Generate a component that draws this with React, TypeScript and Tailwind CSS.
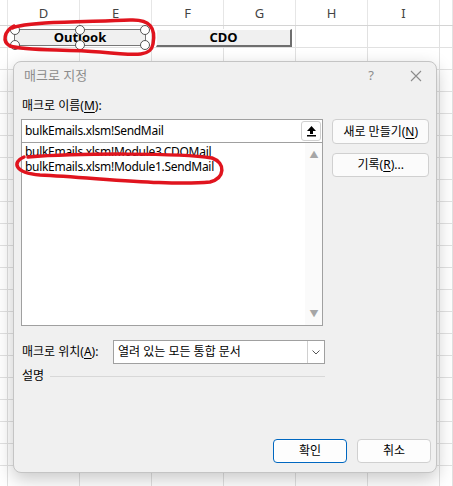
const COLS = [
  { w: 8, label: "" },
  { w: 72, label: "D" },
  { w: 72, label: "E" },
  { w: 72, label: "F" },
  { w: 72, label: "G" },
  { w: 72, label: "H" },
  { w: 72, label: "I" },
  { w: 13, label: "" },
];

const ROWS = Array.from({ length: 21 }, (_, i) => i);

const FONT = "font-['Noto_Sans','Noto_Sans_CJK_KR',sans-serif]";

function Mn({ c }: { c: string }) {
  return (
    <>
      (<span className="underline underline-offset-2">{c}</span>)
    </>
  );
}

function Sheet() {
  return (
    <div className="flex flex-col">
      <div className="flex h-[26px] border-b border-[#d4d4d4] bg-white">
        {COLS.map((c, i) => (
          <div
            key={i}
            style={{ width: c.w }}
            className="flex shrink-0 items-center justify-center border-r border-[#e6e6e6] pt-[3px] text-[13px] text-[#444]"
          >
            {c.label}
          </div>
        ))}
      </div>
      {ROWS.map((r) => (
        <div key={r} className="flex h-[22px] border-b border-[#e1e1e1] bg-white">
          {COLS.map((c, i) => (
            <div key={i} style={{ width: c.w }} className="shrink-0 border-r border-[#e1e1e1]" />
          ))}
        </div>
      ))}
    </div>
  );
}

function Handle({ x, y }: { x: number; y: number }) {
  return (
    <div
      style={{ left: x - 5, top: y - 5 }}
      className="absolute h-[10px] w-[10px] rounded-full border-[1.5px] border-[#555] bg-white"
    />
  );
}

function SheetButtons() {
  return (
    <>
      <div className="absolute left-[14px] top-[29px] flex h-[17px] w-[132px] items-center justify-center border border-[#777] bg-[#f0f0f0] text-[13px] font-bold text-black">
        Outlook
      </div>
      <Handle x={15} y={30} />
      <Handle x={80} y={30} />
      <Handle x={145} y={30} />
      <Handle x={15} y={45} />
      <Handle x={80} y={45} />
      <Handle x={145} y={45} />
      <div className="absolute left-[156px] top-[29px] flex h-[18px] w-[136px] items-center justify-center border border-b-2 border-r-2 border-t-white border-l-white border-b-[#6e6e6e] border-r-[#6e6e6e] bg-[#f0f0f0] text-[13px] font-bold text-black">
        CDO
      </div>
    </>
  );
}

function CollapseIcon() {
  return (
    <svg width="11" height="12" viewBox="0 0 11 12">
      <path d="M5.5 1 L10 6 L7 6 L7 9 L4 9 L4 6 L1 6 Z" fill="#000" />
      <rect x="1" y="10" width="9" height="1.5" fill="#000" />
    </svg>
  );
}

function Dialog() {
  return (
    <div className="absolute left-[13px] top-[61px] flex h-[412px] w-[424px] flex-col rounded-[8px] border border-[#c4c4c4] bg-[#f0f0f0] shadow-[0_6px_18px_rgba(0,0,0,0.22)]">
      <div className="flex h-[28px] items-center justify-between pl-[10px] pr-[14px]">
        <span className="text-[13px] text-[#8c8c8c]">매크로 지정</span>
        <div className="flex items-center gap-[36px] text-[#8c8c8c]">
          <span className="text-[13px]">?</span>
          <svg width="12" height="12" viewBox="0 0 12 12">
            <path d="M1 1 L11 11 M11 1 L1 11" stroke="#8c8c8c" strokeWidth="1.1" />
          </svg>
        </div>
      </div>

      <div className="flex flex-1 flex-col px-[7px] text-[12px] text-black">
        <div className="h-[29px] pt-[8px] leading-[16px] pl-[1px]">
          매크로 이름<Mn c="M" />:
        </div>

        <div className="flex gap-[9px]">
          <div className="flex w-[304px] flex-col">
            <div className="flex h-[24px] items-center justify-between border border-[#a0a0a0] bg-white pl-[3px] pr-[1px]">
              <span className="tracking-[-0.3px]">bulkEmails.xlsm!SendMail</span>
              <div className="flex h-[20px] w-[20px] items-center justify-center rounded-[3px] border border-[#d0d0d0] bg-white">
                <CollapseIcon />
              </div>
            </div>
            <div className="flex h-[183px] border border-t-0 border-[#a0a0a0] bg-white">
              <div className="flex flex-1 flex-col pl-[3px] pt-[1px] leading-[15px] tracking-[-0.3px]">
                <span>bulkEmails.xlsm!Module3.CDOMail</span>
                <span>bulkEmails.xlsm!Module1.SendMail</span>
              </div>
              <div className="flex w-[17px] flex-col items-center justify-between bg-[#fafafa] py-[5px] text-[9px] text-[#a6a6a6]">
                <span>▲</span>
                <span>▼</span>
              </div>
            </div>
          </div>

          <div className="flex w-[97px] flex-col gap-[9px]">
            <div className="flex h-[25px] items-center justify-center rounded-[4px] border border-[#d0d0d0] bg-[#fbfbfb]">
              새로 만들기<Mn c="N" />
            </div>
            <div className="flex h-[24px] items-center justify-center rounded-[4px] border border-[#d0d0d0] bg-[#fbfbfb]">
              기록<Mn c="R" />...
            </div>
          </div>
        </div>

        <div className="mt-[14px] flex w-[304px] items-center justify-between">
          <span className="pl-[1px]">
            매크로 위치<Mn c="A" />:
          </span>
          <div className="flex h-[24px] w-[212px] items-center justify-between border border-[#a0a0a0] bg-white pl-[4px]">
            <span>열려 있는 모든 통합 문서</span>
            <div className="flex h-full w-[17px] items-center justify-center border-l border-[#d0d0d0]">
              <svg width="8" height="5" viewBox="0 0 8 5">
                <path d="M0.5 0.5 L4 4 L7.5 0.5" stroke="#555" fill="none" strokeWidth="1" />
              </svg>
            </div>
          </div>
        </div>

        <div className="mt-[3px] flex w-[304px] items-center gap-[6px] pl-[1px]">
          <span>설명</span>
          <div className="h-px flex-1 bg-[#d8d8d8]" />
        </div>

        <div className="mt-auto mb-[9px] mr-[-2px] flex justify-end gap-[10px]">
          <div className="flex h-[24px] w-[74px] items-center justify-center rounded-[4px] border border-[#0067c0] bg-[#fdfdfd] shadow-[inset_0_0_0_1px_#ffffff]">
            확인
          </div>
          <div className="flex h-[24px] w-[74px] items-center justify-center rounded-[4px] border border-[#d0d0d0] bg-[#fdfdfd]">
            취소
          </div>
        </div>
      </div>
    </div>
  );
}

function Scribbles() {
  return (
    <svg className="pointer-events-none absolute left-0 top-0" width="453" height="486">
      <path
        d="M12 28 C 30 21, 90 22, 130 20 C 150 19, 156 28, 153 44 C 151 56, 140 56, 100 52 C 60 49, 25 51, 10 46 C 2 42, 4 31, 14 26"
        stroke="#e0141e"
        strokeWidth="3.5"
        fill="none"
        strokeLinecap="round"
      />
      <path
        d="M28 157 C 80 153, 180 153, 212 158 C 226 163, 225 178, 210 182 C 170 186, 100 178, 40 175 C 14 173, 12 162, 24 157"
        stroke="#e0141e"
        strokeWidth="3.5"
        fill="none"
        strokeLinecap="round"
      />
    </svg>
  );
}

export default function App() {
  return (
    <div className={`relative h-[486px] w-[453px] overflow-hidden bg-white ${FONT}`}>
      <Sheet />
      <SheetButtons />
      <Dialog />
      <Scribbles />
    </div>
  );
}
